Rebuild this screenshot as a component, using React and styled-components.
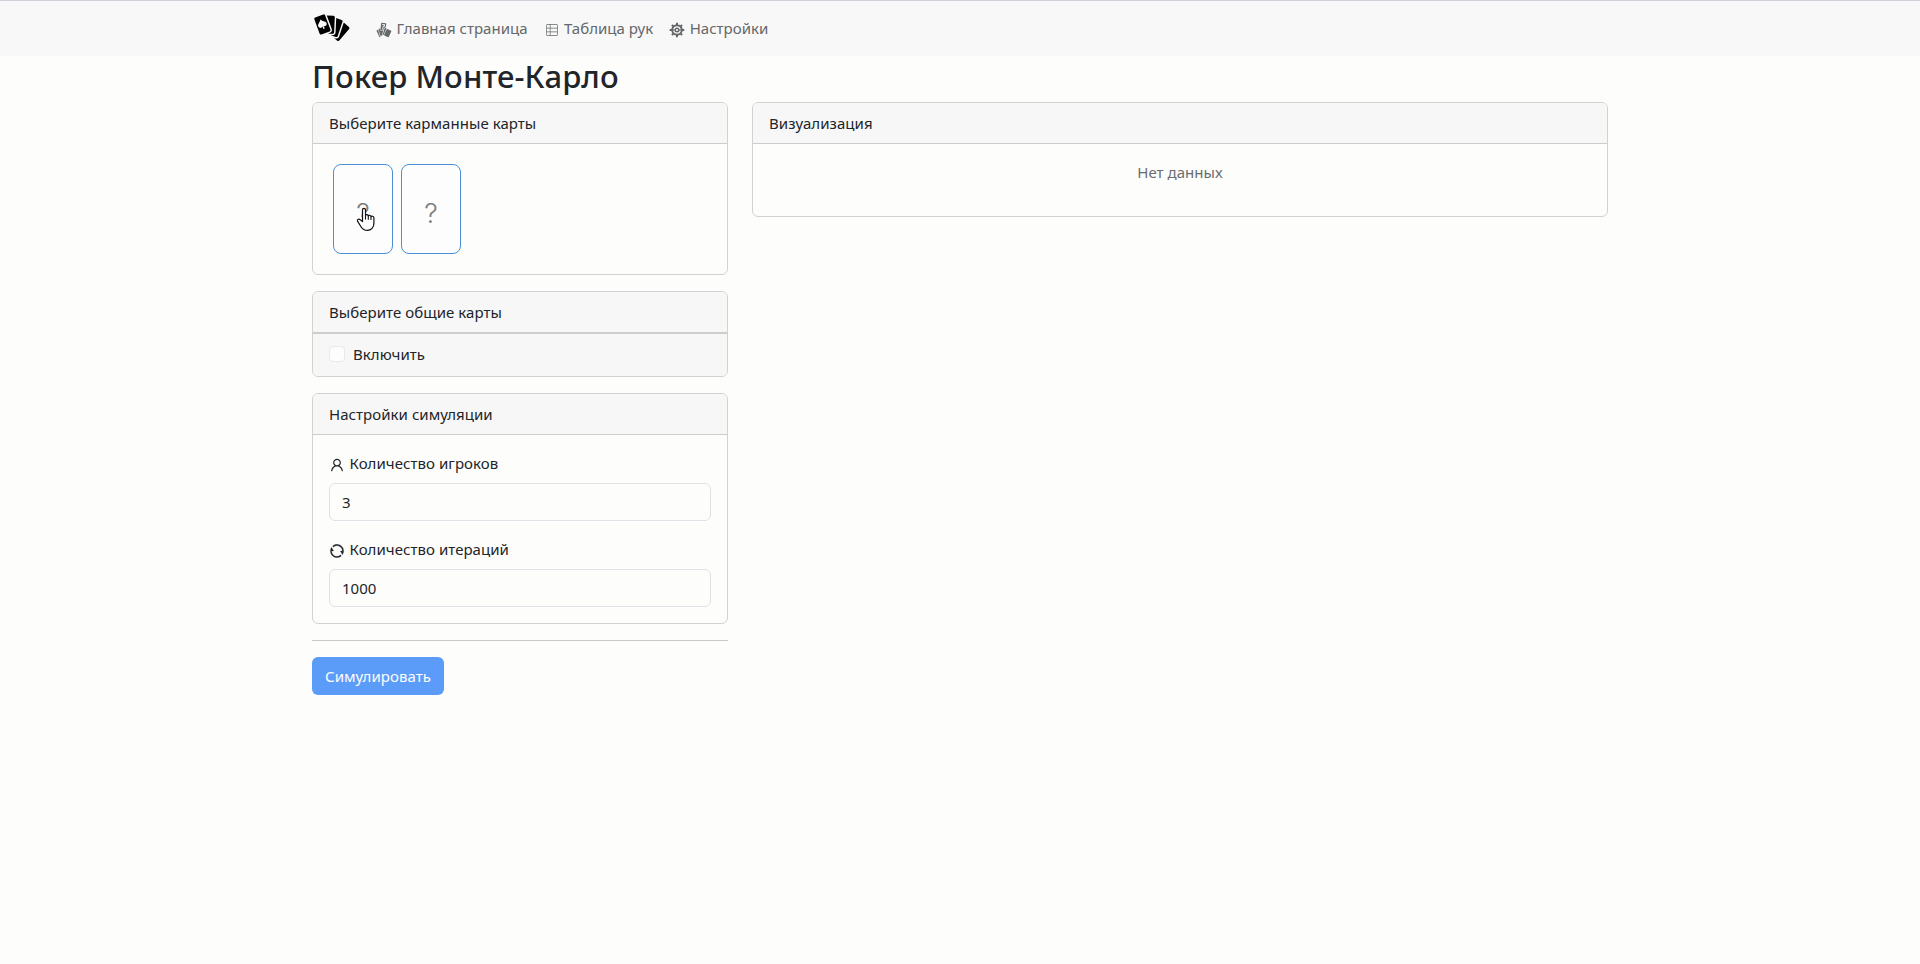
import React from "react";
import styled, { createGlobalStyle } from "styled-components";
import { GiPokerHand, GiCardRandom } from "react-icons/gi";
import { CiViewTable } from "react-icons/ci";
import { AiOutlineUser } from "react-icons/ai";
import { RiRefreshLine } from "react-icons/ri";

const GlobalStyle = createGlobalStyle`
  *, *::before, *::after { box-sizing: border-box; }
  body {
    margin: 0;
    background: #fdfdfc;
    color: #212529;
    font-family: "Noto Sans", "Open Sans", sans-serif;
    font-size: 15px;
    line-height: 24px;
    letter-spacing: 0.05px;
  }
`;

const Navbar = styled.nav`
  height: 56px;
  padding: 7px 0 8px;
  border-top: 1px solid #d0d0d9;
  background: #f8f8f8;
`;

const Container = styled.div`
  width: 1320px;
  margin: 0 auto;
  padding: 0 12px;
`;

const NavRow = styled(Container)`
  display: flex;
  align-items: center;
  height: 40px;
`;

const Brand = styled.a`
  display: flex;
  margin-right: 16px;
  color: #000;
  font-size: 40px;
`;

const NavLink = styled.a`
  display: flex;
  align-items: center;
  gap: 4.5px;
  padding: 0 8px;
  color: #65676a;
  white-space: nowrap;
  letter-spacing: 0.02px;

  svg {
    flex: none;
    width: 16px;
    height: 16px;
    margin-top: 3px;
  }
`;

const Title = styled.h1`
  margin: 0 0 7px;
  padding-top: 1px;
  font-size: 31px;
  font-weight: 550;
  line-height: 38.4px;
  letter-spacing: 0.12px;
`;

const Columns = styled.div`
  display: grid;
  grid-template-columns: 416px 856px;
  column-gap: 24px;
  align-items: start;
`;

const Card = styled.section`
  margin-bottom: 16px;
  border: 1px solid #d2d2d3;
  border-radius: 6px;
  overflow: hidden;
`;

const CardHeader = styled.header`
  padding: 8px 16px;
  border-bottom: 1px solid #cdcdcd;
  background: #f7f7f7;
`;

const CardBody = styled.div`
  padding: 16px;
`;

const CardFooter = styled.footer`
  padding: 8px 16px 10px;
  border-top: 1px solid #cdcdcd;
  background: #f7f7f7;
`;

const Slots = styled.div`
  display: flex;
  gap: 8px;
  padding: 4px;
`;

const Slot = styled.button`
  position: relative;
  width: 60px;
  height: 90px;
  padding: 9px 0 0;
  border: 1px solid #4a90d9;
  border-radius: 8px;
  background: #fdfdfd;
  color: #7b7b7b;
  font: 300 27px/36px Inter, "Noto Sans", sans-serif;
`;

const Pointer = styled.svg`
  position: absolute;
  left: 22px;
  top: 42px;
  width: 20px;
  height: 25px;
`;

const CheckLabel = styled.label`
  display: flex;
  align-items: center;
  gap: 8px;
`;

const Checkbox = styled.input`
  appearance: none;
  width: 16px;
  height: 16px;
  margin: 0;
  border: 1px solid #e8e9eb;
  border-radius: 4px;
  background: #fdfdfd;
`;

const Field = styled.div`
  & + & { margin-top: 16px; }
`;

const FieldLabel = styled.label`
  display: flex;
  align-items: center;
  gap: 4.5px;
  margin-bottom: 8px;

  svg {
    width: 16px;
    height: 16px;
    margin-top: 3px;
    stroke: currentColor;
    stroke-width: 0.3px;
  }
`;

const NumberInput = styled.input`
  display: block;
  width: 100%;
  height: 38px;
  padding: 6px 12px;
  border: 1px solid #e0e1e6;
  border-radius: 6px;
  background: transparent;
  color: #212529;
  font: inherit;
`;

const Divider = styled.hr`
  margin: 16px 0;
  border: 0;
  border-top: 1px solid #c9cacc;
`;

const SubmitButton = styled.button`
  display: block;
  width: 132px;
  height: 38px;
  padding: 0;
  border: 0;
  border-radius: 6px;
  background: #5c9cf9;
  color: #fdfdfd;
  font: inherit;
  letter-spacing: 0.06px;
`;

const EmptyText = styled.p`
  margin: 0 0 16px;
  color: #6a6c6f;
  text-align: center;
`;

const GearIcon = () => (
  <svg viewBox="0 0 16 16" fill="none" stroke="currentColor">
    <circle cx="8" cy="8" r="4.8" strokeWidth="2" />
    <circle cx="8" cy="8" r="1.8" strokeWidth="1.4" />
    <path
      strokeWidth="2"
      d="M8 .7v2.5M8 12.8v2.5M.7 8h2.5M12.8 8h2.5M2.9 2.9l1.7 1.7M11.4 11.4l1.7 1.7M13.1 2.9l-1.7 1.7M4.6 11.4l-1.7 1.7"
    />
    <path strokeWidth="1" d="M3.5 8H6M10 8h2.5" />
  </svg>
);

const HandPointer = () => (
  <Pointer viewBox="0 0 20 25" aria-hidden="true">
    <path
      d="M6.5 14.6V3.1c0-2.2 3-2.2 3 0v5.4c.3-1.4 2.7-1.2 2.8.5.5-1.2 2.6-.9 2.7.7.6-1 2.9-.6 2.9 1.3v5.6c0 3.8-2.7 6.8-6.5 6.8-3.1 0-5-1.4-6.4-3.7L1.5 14.1c-.6-2 1.5-2.6 2.7-1.3z"
      fill="#fff"
      stroke="#111"
      strokeWidth="1.2"
      strokeLinejoin="round"
    />
    <path d="M9.5 8.5v4M12.3 9v3.8M15 9.8v3.3" fill="none" stroke="#111" strokeWidth="1.1" />
  </Pointer>
);

export default function App() {
  return (
    <>
      <GlobalStyle />
      <Navbar>
        <NavRow>
          <Brand><GiPokerHand /></Brand>
          <NavLink><GiCardRandom />Главная страница</NavLink>
          <NavLink><CiViewTable />Таблица рук</NavLink>
          <NavLink><GearIcon />Настройки</NavLink>
        </NavRow>
      </Navbar>
      <Container as="main">
        <Title>Покер Монте-Карло</Title>
        <Columns>
          <div>
            <Card>
              <CardHeader>Выберите карманные карты</CardHeader>
              <CardBody>
                <Slots>
                  <Slot>?<HandPointer /></Slot>
                  <Slot>?</Slot>
                </Slots>
              </CardBody>
            </Card>
            <Card>
              <CardHeader>Выберите общие карты</CardHeader>
              <CardFooter>
                <CheckLabel><Checkbox type="checkbox" />Включить</CheckLabel>
              </CardFooter>
            </Card>
            <Card>
              <CardHeader>Настройки симуляции</CardHeader>
              <CardBody>
                <Field>
                  <FieldLabel><AiOutlineUser />Количество игроков</FieldLabel>
                  <NumberInput defaultValue="3" />
                </Field>
                <Field>
                  <FieldLabel><RiRefreshLine />Количество итераций</FieldLabel>
                  <NumberInput defaultValue="1000" />
                </Field>
              </CardBody>
            </Card>
            <Divider />
            <SubmitButton>Симулировать</SubmitButton>
          </div>
          <Card>
            <CardHeader>Визуализация</CardHeader>
            <CardBody>
              <EmptyText>Нет данных</EmptyText>
            </CardBody>
          </Card>
        </Columns>
      </Container>
    </>
  );
}
